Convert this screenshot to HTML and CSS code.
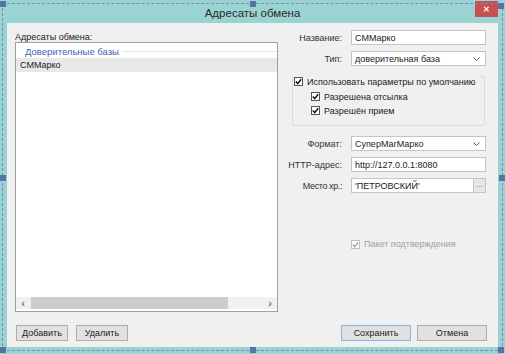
FILE: index.html
```html
<!DOCTYPE html>
<html lang="ru">
  <head>
    <meta charset="UTF-8" />
    <title>Адресаты обмена</title>
    <link rel="stylesheet" href="styles.css">
  </head>
  <body>
    <div class="window">
      <div class="titlebar">
        <span></span>
        <span class="title">Адресаты обмена</span>
        <span class="close">&#x2715;</span>
      </div>

      <div class="client">
        <div class="left">
          <div class="caption">Адресаты обмена:</div>
          <div class="list">
            <div class="list-body">
              <div class="group-head"><span>Доверительные базы</span></div>
              <div class="row selected">СММарко</div>
            </div>
            <div class="hscroll">
              <span class="arrow">&#x2039;</span>
              <span class="track"><span class="thumb"></span></span>
              <span class="arrow">&#x203A;</span>
            </div>
          </div>
          <div class="buttons">
            <button class="btn">Добавить</button>
            <button class="btn">Удалить</button>
          </div>
        </div>

        <div class="right">
          <div class="field-row">
            <label>Название:</label>
            <div class="field">СММарко</div>
          </div>
          <div class="field-row gap">
            <label>Тип:</label>
            <div class="field select">доверительная база
              <svg class="chev" width="7" height="4" viewBox="0 0 7 4"><polyline points="0.5,0.5 3.5,3.5 6.5,0.5" fill="none" stroke="#555" stroke-width="1"/></svg>
            </div>
          </div>

          <div class="groupbox">
            <div class="group-title">
              <span class="cb"><svg width="7" height="7" viewBox="0 0 7 7"><polyline points="0.8,3.6 2.7,5.6 6.2,1.2" fill="none" stroke="#111" stroke-width="1.5"/></svg></span>
              Использовать параметры по умолчанию
            </div>
            <div class="check-row">
              <span class="cb"><svg width="7" height="7" viewBox="0 0 7 7"><polyline points="0.8,3.6 2.7,5.6 6.2,1.2" fill="none" stroke="#111" stroke-width="1.5"/></svg></span>
              Разрешена отсылка
            </div>
            <div class="check-row">
              <span class="cb"><svg width="7" height="7" viewBox="0 0 7 7"><polyline points="0.8,3.6 2.7,5.6 6.2,1.2" fill="none" stroke="#111" stroke-width="1.5"/></svg></span>
              Разрешён прием
            </div>
          </div>

          <div class="field-row format">
            <label>Формат:</label>
            <div class="field select">СуперМагМарко
              <svg class="chev" width="7" height="4" viewBox="0 0 7 4"><polyline points="0.5,0.5 3.5,3.5 6.5,0.5" fill="none" stroke="#555" stroke-width="1"/></svg>
            </div>
          </div>
          <div class="field-row gap">
            <label>HTTP-адрес:</label>
            <div class="field">http://127.0.0.1:8080</div>
          </div>
          <div class="field-row gap">
            <label class="narrow">Место хр.:</label>
            <div class="field browse"><span class="value">'ПЕТРОВСКИЙ'</span><span class="dots">...</span></div>
          </div>

          <div class="check-row disabled">
            <span class="cb"><svg width="7" height="7" viewBox="0 0 7 7"><polyline points="0.8,3.6 2.7,5.6 6.2,1.2" fill="none" stroke="#a8a8a8" stroke-width="1.5"/></svg></span>
            Пакет подтверждения
          </div>

          <div class="buttons end">
            <button class="btn default">Сохранить</button>
            <button class="btn">Отмена</button>
          </div>
        </div>
      </div>

      <div class="selection"></div>
      <span class="handle h-tl"></span>
      <span class="handle h-tc"></span>
      <span class="handle h-tr"></span>
      <span class="handle h-ml"></span>
      <span class="handle h-mr"></span>
      <span class="handle h-bl"></span>
      <span class="handle h-bc"></span>
      <span class="handle h-br"></span>
    </div>
  </body>
</html>
```

FILE: styles.css
```css
* {
  margin: 0;
  padding: 0;
  box-sizing: border-box;
}
body {
  width: 505px;
  height: 354px;
  overflow: hidden;
  background-color: #fff;
  font-family: "Liberation Sans", Arial, sans-serif;
  font-size: 9px;
  color: #222;
}
.window {
  position: relative;
  width: 505px;
  height: 354px;
  background-color: #9bd3d3;
  display: flex;
  flex-direction: column;
}
.titlebar {
  height: 23px;
  display: grid;
  grid-template-columns: 1fr auto 1fr;
  align-items: center;
}
.title {
  font-size: 11.5px;
  color: #2a2a2a;
  padding-top: 2px;
}
.close {
  justify-self: end;
  align-self: start;
  width: 23px;
  height: 16px;
  margin-top: 1px;
  margin-right: 7px;
  background-color: #c75050;
  color: #fff;
  font-size: 8px;
  font-weight: bold;
  display: flex;
  align-items: center;
  justify-content: center;
}
.client {
  margin: 0 7px 0 7px;
  height: 324px;
  background-color: #f0f0f0;
  display: flex;
}
.left {
  width: 271px;
  padding: 10px 0 6px 8px;
  display: flex;
  flex-direction: column;
}
.caption {
  height: 9px;
  line-height: 9px;
}
.list {
  width: 263px;
  height: 270px;
  border: 1px solid #a0a0a0;
  background-color: #fff;
  display: flex;
  flex-direction: column;
}
.list-body {
  flex: 1;
  padding-top: 2px;
}
.group-head {
  height: 13px;
  display: flex;
  align-items: center;
  padding-left: 9px;
  color: #3d62b8;
  font-size: 9.5px;
}
.group-head::after {
  content: "";
  flex: 1;
  height: 1px;
  margin-left: 3px;
  background-color: #e2e6ee;
}
.row {
  height: 14px;
  line-height: 14px;
  padding-left: 4px;
}
.row.selected {
  background-color: #e8e8e8;
}
.hscroll {
  height: 12px;
  margin-bottom: 2px;
  display: flex;
  align-items: center;
  background-color: #f0f0f0;
}
.hscroll .arrow {
  width: 14px;
  text-align: center;
  font-size: 11px;
  line-height: 12px;
  color: #444;
}
.track {
  flex: 1;
  height: 12px;
}
.thumb {
  display: block;
  width: 197px;
  height: 12px;
  margin-left: 1px;
  background-color: #cdcdcd;
}
.buttons {
  margin-top: auto;
  display: flex;
  gap: 8px;
  padding-left: 1px;
}
.buttons.end {
  justify-content: flex-end;
  gap: 6px;
  margin-right: -1px;
}
.btn {
  width: 52px;
  height: 16px;
  border: 1px solid #adadad;
  background-color: #e1e1e1;
  font-family: "Liberation Sans", Arial, sans-serif;
  font-size: 9px;
  color: #222;
}
.buttons.end .btn {
  width: 70px;
}
.btn.default {
  border-color: #7fb6ec;
}
.right {
  flex: 1;
  padding: 7px 12px 6px 0;
  display: flex;
  flex-direction: column;
}
.field-row {
  display: flex;
  justify-content: flex-end;
  align-items: center;
  height: 15px;
}
.field-row.gap {
  margin-top: 6px;
}
.field-row.format {
  margin-top: 10px;
}
.field-row label {
  margin-right: 9px;
  color: #333;
  white-space: nowrap;
}
.field-row label.narrow {
  letter-spacing: -0.4px;
}
.field {
  width: 135px;
  height: 15px;
  border: 1px solid #c4c4c4;
  background-color: #fff;
  padding-left: 3px;
  display: flex;
  align-items: center;
  white-space: nowrap;
}
.field.select {
  justify-content: space-between;
  padding-right: 5px;
}
.field.browse {
  padding-right: 0;
}
.field.browse .value {
  flex: 1;
}
.dots {
  width: 12px;
  height: 13px;
  border-left: 1px solid #c4c4c4;
  background-color: #e6e6e6;
  color: #666;
  font-size: 8px;
  text-align: center;
  line-height: 12px;
}
.groupbox {
  margin: 10px 1px 0 14px;
  height: 50px;
  border: 1px solid #dcdcdc;
  border-radius: 2px;
}
.group-title {
  display: inline-flex;
  align-items: center;
  height: 12px;
  margin: -5px 0 0 1px;
  padding-right: 4px;
  background-color: #f0f0f0;
  color: #222;
  font-size: 9px;
  white-space: nowrap;
}
.check-row {
  display: flex;
  align-items: center;
  height: 14px;
  padding-left: 18px;
  white-space: nowrap;
}
.groupbox .group-title + .check-row {
  margin-top: 2px;
}
.cb {
  width: 9px;
  height: 9px;
  border: 1px solid #555;
  background-color: #fff;
  margin-right: 4px;
  display: flex;
  align-items: center;
  justify-content: center;
}
.check-row.disabled {
  margin-top: 44px;
  padding-left: 73px;
  color: #a0a0a0;
}
.check-row.disabled .cb {
  border-color: #c0c0c0;
}
.selection {
  position: absolute;
  left: 2px;
  top: 3px;
  right: 2px;
  bottom: 3px;
  border: 1px dashed #6f90b0;
  pointer-events: none;
}
.handle {
  position: absolute;
  width: 6px;
  height: 6px;
  background-color: #5673a6;
}
.h-tl { left: 0; top: 1px; }
.h-tc { left: 250px; top: 1px; }
.h-tr { left: 498px; top: 3px; }
.h-ml { left: 0; top: 175px; }
.h-mr { left: 499px; top: 175px; }
.h-bl { left: 0; top: 347px; }
.h-bc { left: 250px; top: 347px; }
.h-br { left: 498px; top: 347px; }
```
